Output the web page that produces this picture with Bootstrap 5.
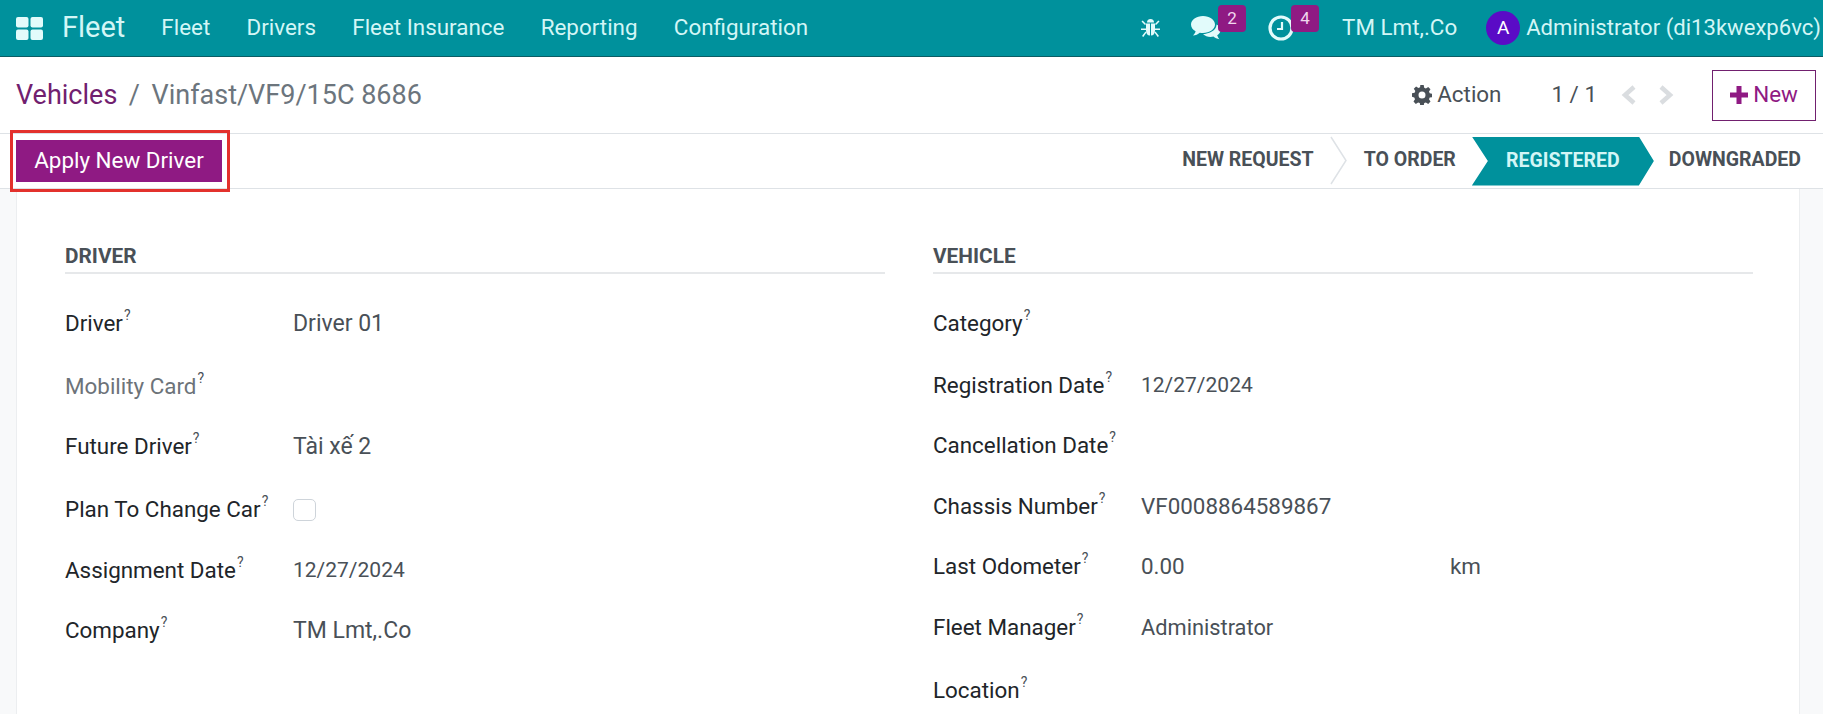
<!DOCTYPE html>
<html lang="en"><head><meta charset="utf-8"><title>Vehicle</title>
<link rel="stylesheet" href="https://cdn.jsdelivr.net/npm/bootstrap@5.3.0/dist/css/bootstrap.min.css">
<style>
html,body{height:714px;overflow:hidden}
body{font-family:Roboto,"Liberation Sans",sans-serif;font-size:22.4px;color:#495057;background:#f8f9fa}
.topnav{height:57px;background:#00919c;border-bottom:1px solid #0b5d64;color:#d3f6f6;white-space:nowrap}
.topnav a{color:#d3f6f6;text-decoration:none}
.apps{margin:0 19px 0 16px;display:block}
.brand{font-size:29px;margin-right:36px}
.menu-gap{gap:36.3px}
.ic-badge{position:absolute;width:28px;height:27px;border-radius:4px;background:#8f1a83;color:#f1d7ee;font-size:17px;line-height:26px;text-align:center}
.sys{position:relative;display:block}
.sys svg{display:block}
.sys-chat{margin-left:31px;width:29px;height:24px}
.sys-clock{margin-left:48px;width:25px;height:26px}
.co-name{margin-left:49px}
.av{width:34px;height:34px;border-radius:50%;background:#5a0bc6;color:#fff;font-size:19px;line-height:34px;text-align:center;margin:0 6px 0 29px}
.panel{height:77px;background:#fff;border-bottom:1px solid #dee2e6;padding:0 7px 0 16px}
.crumb{font-size:27px;color:#6c757d}
.crumb a{color:#71206f;text-decoration:none}
.crumb i{font-style:normal;margin:0 11.5px}
.gear{margin-right:5px}
.pager-txt{margin:0 23px 0 50px;color:#495057}
.chev-gap{margin-left:19px}
.newbtn{width:104px;height:51px;border:1px solid #71206f;border-radius:0;background:#fff;color:#8f1a83;font-size:22.4px;padding:0;margin-left:37px;display:flex;align-items:center;justify-content:center;gap:5px}
.bar{height:55px;background:#fff;border-bottom:1px solid #dee2e6;padding-left:16px;position:relative}
.applybtn{width:206px;height:42px;background:#8f1a83;color:#fff;border:0;border-radius:0;font-size:22.4px;padding:0;margin-top:6px}
.redbox{position:absolute;left:10px;top:-4px;width:220px;height:62px;border:3px solid #e3312c;pointer-events:none}
.stage{font-weight:700;color:#495057;font-size:19.5px;white-space:nowrap;padding-bottom:2px}
.s1{margin-right:16px}.s2{margin:0 16px 0 17px}
.st-active{width:182px;height:49px;margin-bottom:-2px;background:#00919c;color:#d3f6f6;display:flex;align-items:center;justify-content:center;clip-path:polygon(0 0,calc(100% - 15px) 0,100% 50%,calc(100% - 15px) 100%,0 100%,16px 50%)}
.s4{margin:0 22px 0 15px}
.sheet{margin:0 23px 0 16px;height:526px;background:#fff;border-left:1px solid #eceef0;border-right:1px solid #eceef0;padding:0 46px 0 48px;gap:48px}
.fcol{flex:1 1 0;min-width:0}
.ghead{height:35px;margin-top:50px;margin-bottom:21px;border-bottom:2px solid #e6e8ea;font-weight:700;font-size:20.8px;color:#495057;line-height:35px;text-transform:uppercase}
.fr{display:flex;align-items:center;color:#212529;height:58px}
.g2{margin-top:2px}.g3{margin-top:3px}.g4{margin-top:4px}.g5{margin-top:5px}
.fl{width:228px;flex:none}
.fcol.rt .fl{width:208px}
.fl sup{font-size:14px;font-weight:400;color:#495057;top:-.8em;margin-left:1px}
.fv{color:#495057}
.fv-date{font-size:21px}
.fv-wide{font-size:23px}
.fv-tight{font-size:21.8px}
.odo{width:309px;flex:none}
.muted-l{color:#6d7379}
.cbx{width:23px;height:22px;border:1px solid #ced4da;border-radius:5px;background:#fff}
.admin-name{font-size:22.1px;padding-right:2px}
.t-chat{left:27px;top:-11px}.t-clock{left:23px;top:-10px}
</style></head><body>
<nav class="topnav d-flex align-items-center">
 <svg class="apps" width="27" height="23" viewBox="0 0 27 23" fill="#e2fbfb"><rect x="0" y="0" width="12.5" height="10.5" rx="2"/><rect x="14.5" y="0" width="12.5" height="10.5" rx="2"/><rect x="0" y="12.5" width="12.5" height="10.5" rx="2"/><rect x="14.5" y="12.5" width="12.5" height="10.5" rx="2"/></svg>
 <span class="brand">Fleet</span>
 <div class="d-flex menu-gap"><a href="#">Fleet</a><a href="#">Drivers</a><a href="#">Fleet Insurance</a><a href="#">Reporting</a><a href="#">Configuration</a></div>
 <div class="ms-auto d-flex align-items-center">
  <svg width="19" height="20" viewBox="0 0 19 20" fill="#e2fbfb"><path d="M6 4.500a3.500 3.500 0 0 1 7 0z"/><path d="M5 5.500h4v12c-2.500 0-4-2-4-5zM10 5.500h4v7c0 3-1.500 5-4 5z"/><path d="M.5 3.500l1.200-1 3.300 3.500-1 1zM18.500 3.500l-1.200-1-3.300 3.500 1 1zM0 10.500h5v1.500H0zM14 10.500h5v1.500h-5zM1 18l3.500-4.500 1 1L2.300 19zM18 18l-3.500-4.500-1 1L16.700 19z"/></svg>
  <span class="sys sys-chat"><svg width="30" height="25" viewBox="0 0 30 25" fill="#e2fbfb"><path d="M12 0c6.600 0 12 3.800 12 8.500S18.600 17 12 17c-1.200 0-2.200-.1-3.200-.3C7 18.200 4.700 19.300 2 19.600c1.200-1.200 2.200-2.700 2.600-4.300C1.800 13.800 0 11.300 0 8.500 0 3.800 5.400 0 12 0z"/><path d="M25.500 8.500c0 3.500-2.700 6.500-6.500 8-2 .800-4.500 1.500-7 1.500 2 2 4.500 3 7.500 3 1 0 2-.1 3-.4 1.500 1.400 3.500 2.300 6 2.600-1-1-1.800-2.500-2.300-4 2-1.200 3.300-3 3.300-5 0-2.500-1.500-4.500-4-5.700z"/></svg><span class="ic-badge t-chat">2</span></span>
  <span class="sys sys-clock"><svg width="26" height="26" viewBox="0 0 26 26" fill="none" stroke="#e2fbfb"><circle cx="13" cy="13" r="11" stroke-width="3.200"/><path d="M14 7v7H9" stroke-width="2.200"/></svg><span class="ic-badge t-clock">4</span></span>
  <span class="co-name">TM Lmt,.Co</span>
  <span class="av">A</span>
  <span class="admin-name">Administrator (di13kwexp6vc)</span>
 </div>
</nav>
<div class="panel d-flex align-items-center">
 <div class="crumb"><a href="#">Vehicles</a><i>/</i>Vinfast/VF9/15C 8686</div>
 <div class="ms-auto d-flex align-items-center">
  <svg width="20" height="20" viewBox="0 0 20 20" fill="#495057" class="gear"><path fill-rule="evenodd" d="M8.300 0h3.400l.5 2.700 1.700.7 2.300-1.500 2.300 2.300-1.500 2.300.7 1.700 2.700.5v3.400l-2.700.5-.7 1.700 1.500 2.300-2.300 2.300-2.300-1.500-1.700.7-.5 2.700H8.300l-.5-2.700-1.700-.7-2.300 1.500-2.300-2.300 1.500-2.300-.7-1.700L-.1 11.700V8.300l2.700-.5.7-1.700L1.800 3.800l2.300-2.300 2.300 1.500 1.700-.7zM10 6.500a3.500 3.500 0 1 0 0 7 3.500 3.500 0 0 0 0-7z"/></svg>
  <span>Action</span>
  <span class="pager-txt">1 / 1</span>
  <svg width="18" height="22" viewBox="0 0 18 22" fill="none" stroke="#dadde0" stroke-width="4.500"><path d="M14 3 5 11l9 8"/></svg>
  <svg width="18" height="22" viewBox="0 0 18 22" fill="none" stroke="#dadde0" stroke-width="4.500" class="chev-gap"><path d="m4 3 9 8-9 8"/></svg>
  <button class="btn newbtn"><svg width="18" height="18" viewBox="0 0 18 18" fill="#8f1a83"><path d="M6.500 0h5v6.500H18v5h-6.500V18h-5v-6.500H0v-5h6.500z"/></svg>New</button>
 </div>
</div>
<div class="bar d-flex justify-content-between">
 <button class="btn applybtn">Apply New Driver</button>
 <div class="redbox"></div>
 <div class="d-flex align-items-center stage">
  <span class="s1">NEW REQUEST</span>
  <svg width="17" height="49" viewBox="0 0 17 49" fill="none" stroke="#dee2e6" stroke-width="1.500"><path d="m1 1 15 23.500L1 48"/></svg>
  <span class="s2">TO ORDER</span>
  <div class="st-active">REGISTERED</div>
  <span class="s4">DOWNGRADED</span>
 </div>
</div>
<div class="sheet d-flex">
 <div class="fcol">
  <div class="ghead">Driver</div>
  <div class="fr"><span class="fl">Driver<sup>?</sup></span><span class="fv fv-wide">Driver 01</span></div>
  <div class="fr g5"><span class="fl muted-l">Mobility Card<sup>?</sup></span></div>
  <div class="fr g2"><span class="fl">Future Driver<sup>?</sup></span><span class="fv fv-wide">Tài xế 2</span></div>
  <div class="fr g5"><span class="fl">Plan To Change Car<sup>?</sup></span><span class="cbx"></span></div>
  <div class="fr g3"><span class="fl">Assignment Date<sup>?</sup></span><span class="fv fv-date">12/27/2024</span></div>
  <div class="fr g2"><span class="fl">Company<sup>?</sup></span><span class="fv fv-wide">TM Lmt,.Co</span></div>
 </div>
 <div class="fcol rt">
  <div class="ghead">Vehicle</div>
  <div class="fr"><span class="fl">Category<sup>?</sup></span></div>
  <div class="fr g4"><span class="fl">Registration Date<sup>?</sup></span><span class="fv fv-date">12/27/2024</span></div>
  <div class="fr g2"><span class="fl">Cancellation Date<sup>?</sup></span></div>
  <div class="fr g3"><span class="fl">Chassis Number<sup>?</sup></span><span class="fv">VF0008864589867</span></div>
  <div class="fr g2"><span class="fl">Last Odometer<sup>?</sup></span><span class="fv odo">0.00</span><span class="fv">km</span></div>
  <div class="fr g3"><span class="fl">Fleet Manager<sup>?</sup></span><span class="fv fv-tight">Administrator</span></div>
  <div class="fr g5"><span class="fl">Location<sup>?</sup></span></div>
 </div>
</div>
<script src="https://cdn.jsdelivr.net/npm/bootstrap@5.3.0/dist/js/bootstrap.bundle.min.js"></script>
</body></html>
